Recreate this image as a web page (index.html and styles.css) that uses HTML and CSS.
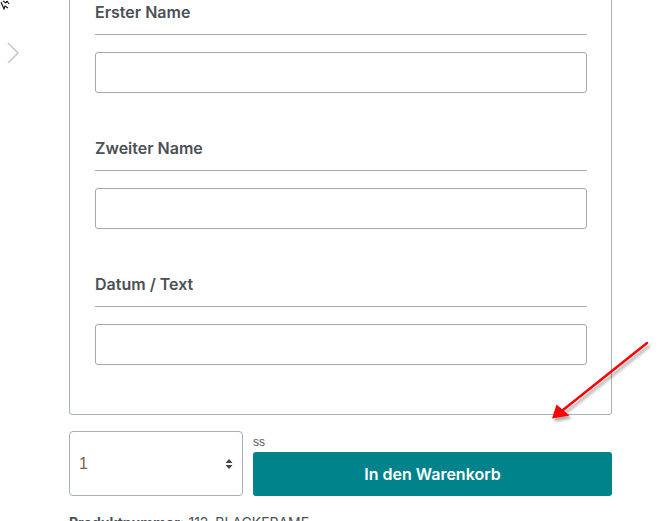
FILE: index.html
```html
<!DOCTYPE html>
<html lang="de">
<head>
<meta charset="utf-8">
<title>Produkt</title>
<link rel="stylesheet" href="styles.css">
</head>
<body>
<div class="page">
  <svg class="cursor" width="12" height="12" viewBox="0 0 12 12"><path d="M1 2 L4 9 L5 6 L8 8 M3 1 L6 3 M6 3 L7 1 M7 1 L9 4" fill="none" stroke="#111" stroke-width="1.1"/></svg>
  <svg class="chev" width="14" height="24" viewBox="0 0 14 24"><polyline points="2,2 12,12 2,22" fill="none" stroke="#c9c9c9" stroke-width="1.6"/></svg>
  <main class="col">
    <section class="box">
      <div class="group">
        <div class="label">Erster Name</div>
        <input class="field" type="text">
      </div>
      <div class="group">
        <div class="label">Zweiter Name</div>
        <input class="field" type="text">
      </div>
      <div class="group">
        <div class="label">Datum / Text</div>
        <input class="field" type="text">
      </div>
    </section>
    <div class="buyrow">
      <div class="qty">
        <span class="qtyval">1</span>
        <svg class="spin" width="8" height="12" viewBox="0 0 8 12"><path d="M4 1 L7.5 5 H0.5 Z M4 11 L7.5 7 H0.5 Z" fill="#444"/></svg>
      </div>
      <div class="buycol">
        <span class="ss">ss</span>
        <button class="cart">In den Warenkorb</button>
      </div>
    </div>
    <p class="prodnr"><b>Produktnummer:</b> 112_BLACKFRAME</p>
  </main>
  <svg class="annot" width="660" height="521" viewBox="0 0 660 521">
    <defs>
      <filter id="sh" x="-20%" y="-20%" width="140%" height="140%">
        <feDropShadow dx="2" dy="3" stdDeviation="1.5" flood-color="#000" flood-opacity="0.35"/>
      </filter>
    </defs>
    <g filter="url(#sh)">
      <line x1="647" y1="343" x2="563" y2="410" stroke="#f00" stroke-width="2.4" stroke-linecap="round"/>
      <polygon points="552,418.5 556.5,404.5 569.5,415.5" fill="#f00"/>
    </g>
  </svg>
</div>
</body>
</html>
```
FILE: styles.css
```css
html, body {
  margin: 0;
  padding: 0;
  background: #fff;
  overflow: hidden;
}
body {
  font-family: Inter, "Liberation Sans", Arial, sans-serif;
  color: #4b5057;
}
.page {
  position: relative;
  width: 660px;
  height: 521px;
  overflow: hidden;
}
.cursor {
  position: absolute;
  left: 0;
  top: 0;
}
.chev {
  position: absolute;
  left: 6px;
  top: 41px;
}
.col {
  margin-left: 69px;
  width: 543px;
  display: flex;
  flex-direction: column;
}
.box {
  box-sizing: border-box;
  width: 543px;
  margin-top: -21px;
  padding: 20px 24px 49px 25px;
  border: 1px solid #a9b0b8;
  border-radius: 0 0 3px 3px;
  display: flex;
  flex-direction: column;
  gap: 43px;
}
.group {
  display: flex;
  flex-direction: column;
}
.label {
  font-size: 16px;
  font-weight: 600;
  line-height: 20px;
  padding-top: 2px;
  padding-bottom: 12px;
  border-bottom: 1px solid #a3aab2;
  color: #4b5057;
}
.field {
  box-sizing: border-box;
  margin: 17px 0 0;
  width: 492px;
  height: 41px;
  border: 1px solid #a3a9b0;
  border-radius: 3px;
  background: #fff;
  outline: none;
  padding: 0 10px;
}
.buyrow {
  margin-top: 16px;
  display: flex;
  gap: 10px;
  align-items: stretch;
}
.qty {
  box-sizing: border-box;
  width: 174px;
  height: 65px;
  border: 1px solid #a9afb6;
  border-radius: 4px;
  display: flex;
  align-items: center;
  justify-content: space-between;
  padding: 0 9px 0 9px;
}
.qtyval {
  font-family: "Liberation Sans", Arial, sans-serif;
  font-size: 16px;
  color: #8a5a3e;
}
.spin {
  display: block;
}
.buycol {
  flex: 1;
  display: flex;
  flex-direction: column;
  justify-content: flex-end;
}
.ss {
  font-family: "Liberation Sans", Arial, sans-serif;
  font-size: 12px;
  line-height: 18px;
  color: #555;
  margin-bottom: 1px;
}
.cart {
  height: 44px;
  width: 100%;
  border: none;
  border-radius: 3px;
  background: #00838a;
  color: #fff;
  font-family: Inter, "Liberation Sans", Arial, sans-serif;
  font-size: 16px;
  font-weight: 600;
  cursor: pointer;
}
.prodnr {
  margin: 18px 0 0;
  font-size: 14px;
  line-height: 18px;
  color: #4b5057;
}
.prodnr b {
  font-weight: 700;
}
.annot {
  position: absolute;
  left: 0;
  top: 0;
  pointer-events: none;
}
```
